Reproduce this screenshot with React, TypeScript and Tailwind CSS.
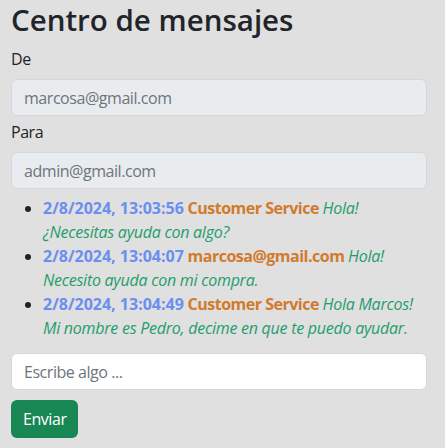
import React from "react";

interface Mensaje {
  fecha: string;
  autor: string;
  saludo: string;
  texto: string;
}

const mensajes: Mensaje[] = [
  { fecha: "2/8/2024, 13:03:56", autor: "Customer Service", saludo: "Hola!", texto: "¿Necesitas ayuda con algo?" },
  { fecha: "2/8/2024, 13:04:07", autor: "marcosa@gmail.com", saludo: "Hola!", texto: "Necesito ayuda con mi compra." },
  {
    fecha: "2/8/2024, 13:04:49",
    autor: "Customer Service",
    saludo: "Hola Marcos!",
    texto: "Mi nombre es Pedro, decime en que te puedo ayudar.",
  },
];

export default function App() {
  return (
    <div
      className="min-h-[448px] bg-[#e0e0e0] pl-[11px] pr-[18px] pt-[2px] text-[16px] leading-6 tracking-[-0.45px] text-[#212529]"
      style={{ fontFamily: '"Open Sans", "Noto Sans", sans-serif' }}
    >
      <h1 className="mb-[9px] text-[29.5px] font-semibold leading-[36px] tracking-normal">Centro de mensajes</h1>

      <label className="mb-2 block">De</label>
      <input
        disabled
        value="marcosa@gmail.com"
        className="block h-[37px] w-full rounded-[6px] border border-[#d3d7dc] bg-[#e9ecef] px-3 text-[#6c757d]"
      />

      <label className="mb-2 mt-1 block">Para</label>
      <input
        disabled
        value="admin@gmail.com"
        className="block h-[37px] w-full rounded-[6px] border border-[#d3d7dc] bg-[#e9ecef] px-3 text-[#6c757d]"
      />

      <ul className="mt-[7px] list-disc pl-8">
        {mensajes.map((m) => (
          <li key={m.fecha}>
            <span className="font-bold tracking-normal text-[#6a8ff0]">{m.fecha}</span>{" "}
            <span className="font-bold tracking-[-0.5px] text-[#d27a2e]">{m.autor}</span>{" "}
            <span className="italic tracking-[-0.25px] text-[#1f9e6c]">
              {m.saludo}
              <br />
              {m.texto}
            </span>
          </li>
        ))}
      </ul>

      <input
        placeholder="Escribe algo ..."
        className="mt-[13px] block h-[37px] w-full rounded-[6px] border border-[#d3d7dc] bg-white px-3 placeholder:text-[#6c757d]"
      />

      <button className="mt-[10px] h-[38px] rounded-[6px] bg-[#198754] px-3 text-white">Enviar</button>
    </div>
  );
}
